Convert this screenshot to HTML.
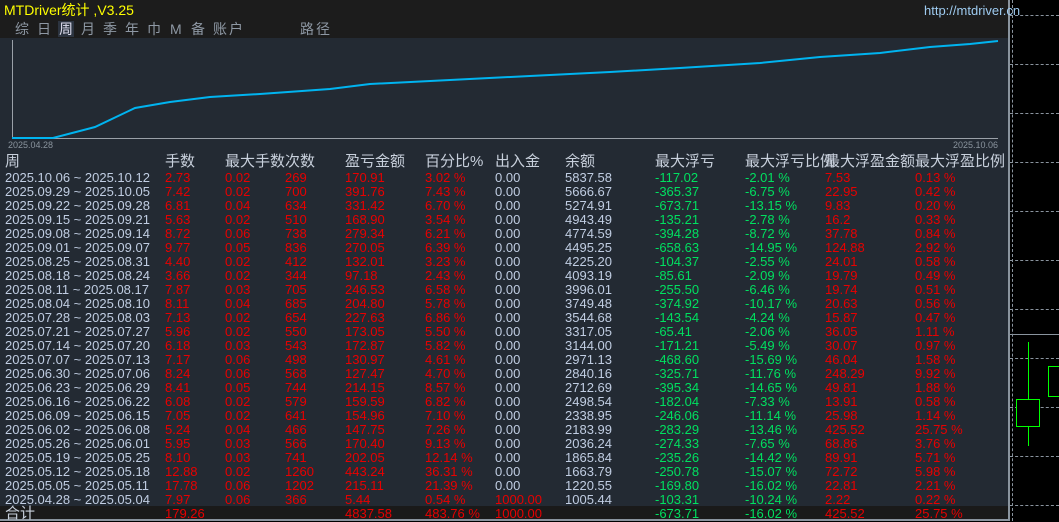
<!DOCTYPE html><html><head><meta charset="utf-8"><style>
body{margin:0;width:1059px;height:521px;background:#000;overflow:hidden;position:relative;font-family:"Liberation Sans","Noto Sans CJK SC",sans-serif}
#p{position:absolute;left:0;top:0;width:1008px;height:519px;background:#232a33;border-right:2px solid #8a949e;border-bottom:2px solid #8a949e}
#t{position:absolute;left:0;top:0;width:1008px;height:38px;background:#1c1c1c}
.ti{position:absolute;left:4px;top:0;color:#ffff00;font-size:14px}
.url{position:absolute;left:924px;top:3px;color:#9ecbf0;font-size:13px}
.tb{position:absolute;top:21px;color:#8e98a4;font-size:14px;line-height:16px}
.r{position:absolute;left:0;width:1008px;height:14px;font-size:13px;line-height:14px;white-space:nowrap}
.r span{position:absolute;top:0}
.h{color:#c8d0dc;font-size:15px}
.d{color:#c0cde2}.R{color:#e80000}.G{color:#00e060}.W{color:#c0cde2}
#tot{position:absolute;left:0;top:506px;width:1008px;height:13px;background:#1a1a1a}
.dh{position:absolute;left:1010px;width:49px;border-top:1px dashed #8a949e}
</style></head><body>
<div id="p"></div>
<div id="t"></div>
<div class="ti">MTDriver统计 ,V3.25</div>
<div class="url">http://mtdriver.cn</div>
<div class="tb" style="left:15px">综</div><div class="tb" style="left:37px">日</div><div class="tb" style="left:58px;background:#2c3440;color:#dde;padding:0 1px">周</div><div class="tb" style="left:81px">月</div><div class="tb" style="left:103px">季</div><div class="tb" style="left:125px">年</div><div class="tb" style="left:147px">巾</div><div class="tb" style="left:170px">M</div><div class="tb" style="left:191px">备</div><div class="tb" style="left:213px;letter-spacing:2px">账户</div><div class="tb" style="left:300px;letter-spacing:2px">路径</div>
<svg style="position:absolute;left:0;top:38px" width="1008" height="115">
<line x1="12.5" y1="2" x2="12.5" y2="100" stroke="#9aa0a8"/>
<line x1="12" y1="100.5" x2="998" y2="100.5" stroke="#9aa0a8"/>
<polyline fill="none" stroke="#00b4f0" stroke-width="2" points="12,100 53,100 95,89 135,70 170,64 210,59 260,56 330,51 370,46 450,42 530,38 610,34 680,30 760,25 820,19 880,15 930,9 970,6 998,3"/>
<text x="8" y="110" fill="#8a949e" font-size="9" font-family="Liberation Sans">2025.04.28</text>
<text x="953" y="110" fill="#8a949e" font-size="9" font-family="Liberation Sans">2025.10.06</text>
</svg>
<div class="r h" style="top:155px"><span style="left:5px">周</span><span style="left:165px">手数</span><span style="left:225px">最大手数次数</span><span style="left:345px">盈亏金额</span><span style="left:425px">百分比%</span><span style="left:495px">出入金</span><span style="left:565px">余额</span><span style="left:655px">最大浮亏</span><span style="left:745px">最大浮亏比例</span><span style="left:825px">最大浮盈金额</span><span style="left:915px">最大浮盈比例</span></div>
<div id="rows"></div>
<div id="tot"></div>
<div class="r" style="top:507px"><span class="h" style="left:5px">合计</span><span class="R" style="left:165px">179.26</span><span class="R" style="left:345px">4837.58</span><span class="R" style="left:425px">483.76 %</span><span class="R" style="left:495px">1000.00</span><span class="G" style="left:655px">-673.71</span><span class="G" style="left:745px">-16.02 %</span><span class="R" style="left:825px">425.52</span><span class="R" style="left:915px">25.75 %</span></div>
<div style="position:absolute;left:1012px;top:0;height:521px;border-left:1px dashed #8a949e"></div>
<div class="dh" style="top:15px"></div><div class="dh" style="top:64px"></div><div class="dh" style="top:113px"></div><div class="dh" style="top:162px"></div><div class="dh" style="top:211px"></div><div class="dh" style="top:260px"></div><div class="dh" style="top:309px"></div><div class="dh" style="top:358px"></div><div class="dh" style="top:407px"></div><div class="dh" style="top:456px"></div><div class="dh" style="top:505px"></div>
<div style="position:absolute;left:1010px;top:334px;width:49px;border-top:1px solid #8a949e"></div>
<div style="position:absolute;left:1028px;top:342px;width:1px;height:104px;background:#00ff00"></div>
<div style="position:absolute;left:1016px;top:399px;width:22px;height:26px;border:1px solid #00ff00;background:#000"></div>
<div style="position:absolute;left:1048px;top:366px;width:20px;height:29px;border:1px solid #00ff00"></div>
<script>
var d=[["2025.10.06 ~ 2025.10.12","2.73","0.02","269","170.91","3.02 %","0.00","5837.58","-117.02","-2.01 %","7.53","0.13 %"],
["2025.09.29 ~ 2025.10.05","7.42","0.02","700","391.76","7.43 %","0.00","5666.67","-365.37","-6.75 %","22.95","0.42 %"],
["2025.09.22 ~ 2025.09.28","6.81","0.04","634","331.42","6.70 %","0.00","5274.91","-673.71","-13.15 %","9.83","0.20 %"],
["2025.09.15 ~ 2025.09.21","5.63","0.02","510","168.90","3.54 %","0.00","4943.49","-135.21","-2.78 %","16.2","0.33 %"],
["2025.09.08 ~ 2025.09.14","8.72","0.06","738","279.34","6.21 %","0.00","4774.59","-394.28","-8.72 %","37.78","0.84 %"],
["2025.09.01 ~ 2025.09.07","9.77","0.05","836","270.05","6.39 %","0.00","4495.25","-658.63","-14.95 %","124.88","2.92 %"],
["2025.08.25 ~ 2025.08.31","4.40","0.02","412","132.01","3.23 %","0.00","4225.20","-104.37","-2.55 %","24.01","0.58 %"],
["2025.08.18 ~ 2025.08.24","3.66","0.02","344","97.18","2.43 %","0.00","4093.19","-85.61","-2.09 %","19.79","0.49 %"],
["2025.08.11 ~ 2025.08.17","7.87","0.03","705","246.53","6.58 %","0.00","3996.01","-255.50","-6.46 %","19.74","0.51 %"],
["2025.08.04 ~ 2025.08.10","8.11","0.04","685","204.80","5.78 %","0.00","3749.48","-374.92","-10.17 %","20.63","0.56 %"],
["2025.07.28 ~ 2025.08.03","7.13","0.02","654","227.63","6.86 %","0.00","3544.68","-143.54","-4.24 %","15.87","0.47 %"],
["2025.07.21 ~ 2025.07.27","5.96","0.02","550","173.05","5.50 %","0.00","3317.05","-65.41","-2.06 %","36.05","1.11 %"],
["2025.07.14 ~ 2025.07.20","6.18","0.03","543","172.87","5.82 %","0.00","3144.00","-171.21","-5.49 %","30.07","0.97 %"],
["2025.07.07 ~ 2025.07.13","7.17","0.06","498","130.97","4.61 %","0.00","2971.13","-468.60","-15.69 %","46.04","1.58 %"],
["2025.06.30 ~ 2025.07.06","8.24","0.06","568","127.47","4.70 %","0.00","2840.16","-325.71","-11.76 %","248.29","9.92 %"],
["2025.06.23 ~ 2025.06.29","8.41","0.05","744","214.15","8.57 %","0.00","2712.69","-395.34","-14.65 %","49.81","1.88 %"],
["2025.06.16 ~ 2025.06.22","6.08","0.02","579","159.59","6.82 %","0.00","2498.54","-182.04","-7.33 %","13.91","0.58 %"],
["2025.06.09 ~ 2025.06.15","7.05","0.02","641","154.96","7.10 %","0.00","2338.95","-246.06","-11.14 %","25.98","1.14 %"],
["2025.06.02 ~ 2025.06.08","5.24","0.04","466","147.75","7.26 %","0.00","2183.99","-283.29","-13.46 %","425.52","25.75 %"],
["2025.05.26 ~ 2025.06.01","5.95","0.03","566","170.40","9.13 %","0.00","2036.24","-274.33","-7.65 %","68.86","3.76 %"],
["2025.05.19 ~ 2025.05.25","8.10","0.03","741","202.05","12.14 %","0.00","1865.84","-235.26","-14.42 %","89.91","5.71 %"],
["2025.05.12 ~ 2025.05.18","12.88","0.02","1260","443.24","36.31 %","0.00","1663.79","-250.78","-15.07 %","72.72","5.98 %"],
["2025.05.05 ~ 2025.05.11","17.78","0.06","1202","215.11","21.39 %","0.00","1220.55","-169.80","-16.02 %","22.81","2.21 %"],
["2025.04.28 ~ 2025.05.04","7.97","0.06","366","5.44","0.54 %","1000.00","1005.44","-103.31","-10.24 %","2.22","0.22 %"]];
var x=[5,165,225,285,345,425,495,565,655,745,825,915],c=["d","R","R","R","R","R","W","W","G","G","R","R"],h="";
d.forEach(function(r,i){h+='<div class="r" style="top:'+(171+i*14)+'px">';r.forEach(function(v,j){var cl=c[j];if(j==6&&v!="0.00")cl="R";h+='<span class="'+cl+'" style="left:'+x[j]+'px">'+v+'</span>'});h+='</div>'});
document.getElementById("rows").innerHTML=h;
</script>
</body></html>
